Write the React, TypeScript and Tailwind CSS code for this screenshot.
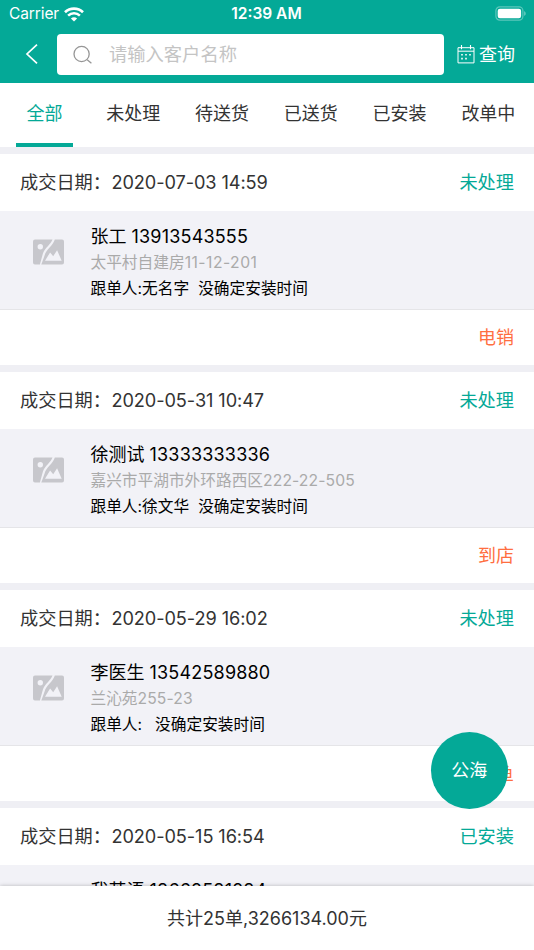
import React from 'react';

type Order = {
  date: string;
  status: string;
  name: string;
  phone: string;
  addressText: string;
  addressNumber: string;
  numberTracking: string;
  follower: string;
  followGap: string;
  source: string;
};

const orders: Order[] = [
  { date: '2020-07-03 14:59', status: '未处理', name: '张工', phone: '13913543555', addressText: '太平村自建房', addressNumber: '11-12-201', numberTracking: 'tracking-[0.48px]', follower: '无名字', followGap: 'gap-[9px]', source: '电销' },
  { date: '2020-05-31 10:47', status: '未处理', name: '徐测试', phone: '13333333336', addressText: '嘉兴市平湖市外环路西区', addressNumber: '222-22-505', numberTracking: 'tracking-[0.1px]', follower: '徐文华', followGap: 'gap-[9px]', source: '到店' },
  { date: '2020-05-29 16:02', status: '未处理', name: '李医生', phone: '13542589880', addressText: '兰沁苑', addressNumber: '255-23', numberTracking: 'tracking-[0.1px]', follower: '', followGap: 'gap-[13px]', source: '闲鱼' },
  { date: '2020-05-15 16:54', status: '已安装', name: '我英语', phone: '18662581284', addressText: '', addressNumber: '', numberTracking: '', follower: '', followGap: 'gap-[13px]', source: '' },
];

const tabs = ['全部', '未处理', '待送货', '已送货', '已安装', '改单中'];

function StatusBar() {
  return (
    <div className="grid h-[28px] grid-cols-3 items-center pl-[9px] pr-[8px] text-[15.5px] leading-[28px]">
      <div className="flex items-center gap-[5px]">
        <span className="tracking-[-0.1px]">Carrier</span>
        <svg width="20" height="15" viewBox="0 0 20 15" fill="none">
          <path d="M1 5.2C6 .5 14 .5 19 5.2" stroke="white" strokeWidth="2.7" />
          <path d="M4.1 8.6c3.4-3.1 8.4-3.1 11.8 0" stroke="white" strokeWidth="2.6" />
          <path d="M6.9 11.4c1.8-1.7 4.4-1.7 6.2 0L10 14.5z" fill="white" />
        </svg>
      </div>
      <span className="-ml-[2px] text-center font-semibold">12:39 AM</span>
      <svg className="-mt-px justify-self-end" width="31" height="15" viewBox="0 0 31 15" fill="none">
        <rect x=".9" y=".9" width="27" height="13.2" rx="3.8" stroke="white" strokeOpacity=".35" strokeWidth="1.2" />
        <rect x="2.7" y="2.7" width="23.4" height="9.6" rx="2.2" fill="white" />
        <path d="M29.3 5.2c1.7.7 1.7 3.9 0 4.6z" fill="white" fillOpacity=".5" />
      </svg>
    </div>
  );
}

function Header() {
  return (
    <header className="h-[82.5px] shrink-0 bg-[#04a997] text-white">
      <StatusBar />
      <div className="flex items-center pt-[6px]">
        <svg className="ml-[25px] -mt-px" width="14" height="22" viewBox="0 0 14 22" fill="none">
          <path d="M12 1.7 2 11l10 9.3" stroke="white" strokeWidth="1.7" />
        </svg>
        <div className="ml-[18px] flex h-[41px] w-[386.5px] items-center rounded-[4px] bg-white">
          <svg className="ml-[16px]" width="20" height="20" viewBox="0 0 20 20" fill="none" stroke="#969696" strokeWidth="1.3">
            <circle cx="8.6" cy="9" r="7.6" />
            <path d="m14.2 14.7 4.2 3.6" />
          </svg>
          <span className="-mt-[2px] ml-[16px] text-[18.3px] leading-[24px] text-[#c4c4c4]">请输入客户名称</span>
        </div>
        <svg className="ml-[13.5px]" width="18" height="19" viewBox="0 0 18 19" fill="none" stroke="white">
          <path d="M1 2.7h16v15.2H1zM1 6.2h16" strokeWidth="1" />
          <path d="M4.5 0v4.2M13.5 0v4.2" strokeWidth="1.1" />
          <path d="M4.2 9.8h1.6M8.2 9.8h1.6M12.2 9.8h1.6M4.2 13.6h1.6M8.2 13.6h1.6" strokeWidth="1.6" />
        </svg>
        <span className="ml-[4px] text-[18px] leading-[24px]">查询</span>
      </div>
    </header>
  );
}

function PhotoIcon() {
  return (
    <svg className="ml-[33px] mt-[28.5px] shrink-0" width="31" height="26" viewBox="0 0 31 26" fill="#c7c7cc">
      <path d="M2 .5h17.5C17.7 5.5 12 8.7 10 14.2L6.9 25.5H2a2 2 0 0 1-2-2v-21a2 2 0 0 1 2-2Z" />
      <path d="M21.8.5H29a2 2 0 0 1 2 2v21a2 2 0 0 1-2 2H8.3l3.2-8.8C13.3 10 19.9 6.8 21.8.5Z" />
      <circle cx="7.3" cy="7.8" r="2.7" fill="#f2f2f7" />
      <path d="m12 21.8 5.1-8.4 3.1 3.8 3.9-6 4.6 10.6Z" fill="#f2f2f7" />
    </svg>
  );
}

function OrderCard({ order }: { order: Order }) {
  return (
    <article className="h-[218px] shrink-0 border-b-[7px] border-[#efeff4] bg-white">
      <div className="flex h-[57px] items-center justify-between pl-[20px] pr-[20px] pt-[2px] text-[18.2px] text-[#333]">
        <div className="flex">
          <span className="w-[91.5px] whitespace-nowrap">成交日期：</span>
          <span className="tracking-[-0.1px]">{order.date}</span>
        </div>
        <span className="text-[#04a997]">{order.status}</span>
      </div>
      <div className="flex h-[99px] border-b border-[#e5e5e8] bg-[#f2f2f7]">
        <PhotoIcon />
        <div className="ml-[26.5px] mt-[13px] whitespace-nowrap text-[15.7px] leading-[26px] text-black">
          <div className="text-[18px]">{order.name} <span className="tracking-[0.18px]">{order.phone}</span></div>
          <div className="text-[#aaa]">{order.addressText}<span className={order.numberTracking}>{order.addressNumber}</span></div>
          <div className={`flex ${order.followGap}`}><span>跟单人:{order.follower}</span><span>没确定安装时间</span></div>
        </div>
      </div>
      <div className="flex h-[55px] items-center justify-end pr-[20px] pt-px text-[18px] text-[#ff6e40]">{order.source}</div>
    </article>
  );
}

export default function App() {
  return (
    <div className="relative flex h-[950px] w-[534px] flex-col overflow-hidden bg-white font-['Inter','Noto_Sans_CJK_SC',sans-serif]">
      <Header />
      <nav className="flex h-[71px] shrink-0 border-b-[7px] border-[#efeff4]">
        {tabs.map((tab, i) => (
          <div key={tab} className="flex w-[88.8px] shrink-0 flex-col items-center justify-between pt-[17px] text-[18px] leading-[27px] text-[#333]">
            <span className={i === 0 ? 'text-[#04a997]' : ''}>{tab}</span>
            {i === 0 && <span className="h-[4px] w-[56.5px] bg-[#04a997]" />}
          </div>
        ))}
      </nav>
      <main className="flex min-h-0 flex-1 flex-col overflow-hidden">
        {orders.map((order) => <OrderCard key={order.date} order={order} />)}
      </main>
      <footer className="z-10 flex h-[64px] shrink-0 items-center justify-center bg-white text-[18px] text-[#333] shadow-[0_0_4px_rgba(0,0,0,0.25)]">
        <span>共计25单,3266134.00元</span>
      </footer>
      <button className="absolute left-[430.5px] top-[731.5px] z-20 size-[77.5px] rounded-full bg-[#04a997] text-[18px] text-white">公海</button>
    </div>
  );
}
